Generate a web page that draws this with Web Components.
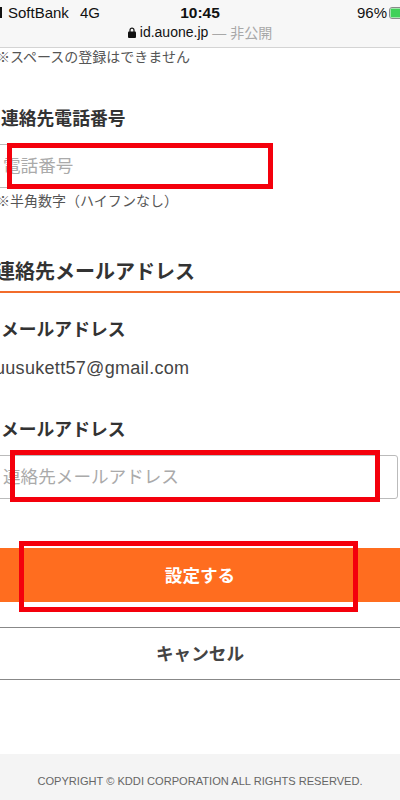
<!DOCTYPE html>
<html lang="ja">
<head>
<meta charset="utf-8">
<title>連絡先</title>
<style>
  html, body { margin: 0; padding: 0; }
  body {
    width: 400px;
    height: 800px;
    overflow: hidden;
    background: #fff;
    font-family: "Liberation Sans", "Noto Sans CJK JP", sans-serif;
    color: #333;
  }
</style>
</head>
<body>
<phone-bar carrier="SoftBank" net="4G" time="10:45" battery="96%" host="id.auone.jp" note="— 非公開"></phone-bar>
<small-note top="0">※スペースの登録はできません</small-note>
<field-label top="40">連絡先電話番号</field-label>
<text-box top="12" width="278" hint="電話番号" mark="7,-1,266,46"></text-box>
<small-note top="4">※半角数字（ハイフンなし）</small-note>
<section-head>連絡先メールアドレス</section-head>
<field-label top="24">メールアドレス</field-label>
<plain-value>uusukett57@gmail.com</plain-value>
<field-label top="37">メールアドレス</field-label>
<text-box top="12" width="406" hint="連絡先メールアドレス" mark="10,-5,370,52"></text-box>
<action-button kind="primary" top="49">設定する</action-button>
<action-button kind="plain" top="25">キャンセル</action-button>
<page-footer>COPYRIGHT © KDDI CORPORATION ALL RIGHTS RESERVED.</page-footer>

<script>
class PhoneBar extends HTMLElement {
  constructor() {
    super();
    this.attachShadow({ mode: 'open' });
    const a = (n) => this.getAttribute(n);
    this.shadowRoot.innerHTML = `
      <style>
        :host {
          display: block;
          height: 47px;
          background: #f7f7f7;
          border-bottom: 1px solid #d4d4d4;
          color: #111;
          font-family: "Liberation Sans", "Noto Sans CJK JP", sans-serif;
        }
        #top {
          display: grid;
          grid-template-columns: 1fr auto 1fr;
          align-items: center;
          height: 25px;
          font-size: 15px;
        }
        #left { display: flex; align-items: center; }
        #signal { width: 2px; height: 11px; background: #111; margin-right: 6px; }
        #net { margin-left: 11px; }
        #time { font-weight: bold; font-size: 15.5px; }
        #right { display: flex; align-items: center; justify-content: flex-end; gap: 2px; }
        #url {
          display: flex;
          align-items: center;
          justify-content: center;
          gap: 4px;
          font-size: 14px;
          height: 14px;
        }
        #note { color: #a8a8a8; }
      </style>
      <div id="top">
        <div id="left"><span id="signal"></span><span>${a('carrier')}</span><span id="net">${a('net')}</span></div>
        <div id="time">${a('time')}</div>
        <div id="right">
          <span>${a('battery')}</span>
          <svg width="11" height="12" viewBox="0 0 11 12"><rect x="0.5" y="0.5" width="14" height="11" rx="2.5" fill="#fff" stroke="#8a8a8a"/><rect x="1.5" y="1.5" width="12" height="9" rx="1" fill="#3fd158"/></svg>
        </div>
      </div>
      <div id="url">
        <svg width="8" height="11" viewBox="0 0 8 11"><path d="M2 5V3.2a2 2 0 0 1 4 0V5" fill="none" stroke="#111" stroke-width="1.2"/><rect x="0" y="4.6" width="8" height="6.4" rx="1" fill="#111"/></svg>
        <span>${a('host')}</span><span id="note">${a('note')}</span>
      </div>
    `;
  }
}

class SmallNote extends HTMLElement {
  constructor() {
    super();
    this.attachShadow({ mode: 'open' });
    this.shadowRoot.innerHTML = `
      <style>
        :host {
          display: block;
          margin-left: -4px;
          font-size: 14px;
          line-height: 18px;
          color: #555;
          white-space: nowrap;
        }
      </style>
      <slot></slot>
    `;
    this.style.marginTop = (this.getAttribute('top') || 0) + 'px';
  }
}

class FieldLabel extends HTMLElement {
  constructor() {
    super();
    this.attachShadow({ mode: 'open' });
    this.shadowRoot.innerHTML = `
      <style>
        :host {
          display: block;
          padding-left: 1px;
          font-size: 17.8px;
          font-weight: bold;
          line-height: 26px;
          color: #333;
          white-space: nowrap;
        }
      </style>
      <slot></slot>
    `;
    this.style.marginTop = (this.getAttribute('top') || 0) + 'px';
  }
}

class TextBox extends HTMLElement {
  constructor() {
    super();
    this.attachShadow({ mode: 'open' });
    const w = this.getAttribute('width');
    const [x, y, mw, mh] = this.getAttribute('mark').split(',');
    this.shadowRoot.innerHTML = `
      <style>
        :host { display: block; position: relative; height: 44px; }
        #box {
          box-sizing: border-box;
          width: ${w}px;
          height: 44px;
          margin-left: -8px;
          border: 1px solid #bbb;
          border-radius: 3px;
          background: #fff;
          padding: 0 0 4px 10px;
          display: flex;
          align-items: center;
          color: #aaa;
          font-size: 17.6px;
          white-space: nowrap;
        }
        #mark {
          position: absolute;
          box-sizing: border-box;
          left: ${x}px;
          top: ${y}px;
          width: ${mw}px;
          height: ${mh}px;
          border: 5px solid #f4000c;
        }
      </style>
      <div id="box">${this.getAttribute('hint')}</div>
      <div id="mark"></div>
    `;
    this.style.marginTop = this.getAttribute('top') + 'px';
  }
}

class SectionHead extends HTMLElement {
  constructor() {
    super();
    this.attachShadow({ mode: 'open' });
    this.shadowRoot.innerHTML = `
      <style>
        :host {
          display: block;
          margin-top: 47px;
          margin-left: -5px;
          height: 34px;
          font-size: 20px;
          font-weight: bold;
          line-height: 30px;
          color: #333;
          white-space: nowrap;
          border-bottom: 2px solid #f26c2b;
        }
      </style>
      <slot></slot>
    `;
  }
}

class PlainValue extends HTMLElement {
  constructor() {
    super();
    this.attachShadow({ mode: 'open' });
    this.shadowRoot.innerHTML = `
      <style>
        :host {
          display: block;
          margin-top: 13px;
          margin-left: -5px;
          font-size: 18px;
          letter-spacing: 0.3px;
          line-height: 24px;
          color: #444;
          white-space: nowrap;
        }
      </style>
      <slot></slot>
    `;
  }
}

class ActionButton extends HTMLElement {
  constructor() {
    super();
    this.attachShadow({ mode: 'open' });
    const primary = this.getAttribute('kind') === 'primary';
    this.shadowRoot.innerHTML = `
      <style>
        :host {
          display: flex;
          position: relative;
          align-items: center;
          justify-content: center;
          box-sizing: border-box;
          padding-bottom: 2px;
          font-weight: bold;
          font-size: 17.6px;
        }
        :host([kind="primary"]) { height: 54px; background: #ff6d1f; color: #fff; }
        :host([kind="plain"]) {
          height: 53px;
          background: #fff;
          color: #444;
          border-top: 1px solid #888;
          border-bottom: 1px solid #888;
        }
        #mark {
          position: absolute;
          box-sizing: border-box;
          left: 19px;
          top: -7px;
          width: 339px;
          height: 71px;
          border: 5px solid #f4000c;
        }
      </style>
      <slot></slot>
      ${primary ? '<div id="mark"></div>' : ''}
    `;
    this.style.marginTop = this.getAttribute('top') + 'px';
  }
}

class PageFooter extends HTMLElement {
  constructor() {
    super();
    this.attachShadow({ mode: 'open' });
    this.shadowRoot.innerHTML = `
      <style>
        :host {
          display: flex;
          align-items: center;
          justify-content: center;
          box-sizing: border-box;
          margin-top: 74px;
          height: 46px;
          padding-top: 8px;
          background: #f4f4f4;
          color: #666;
          font-size: 11.1px;
          white-space: nowrap;
        }
      </style>
      <slot></slot>
    `;
  }
}

customElements.define('phone-bar', PhoneBar);
customElements.define('small-note', SmallNote);
customElements.define('field-label', FieldLabel);
customElements.define('text-box', TextBox);
customElements.define('section-head', SectionHead);
customElements.define('plain-value', PlainValue);
customElements.define('action-button', ActionButton);
customElements.define('page-footer', PageFooter);
</script>
</body>
</html>
